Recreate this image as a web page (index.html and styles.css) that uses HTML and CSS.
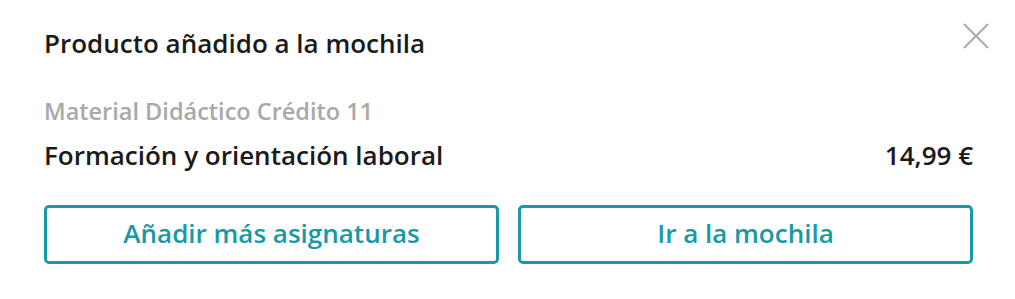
FILE: index.html
```html
<!DOCTYPE html>
<html lang="es">
<head>
<meta charset="UTF-8" />
<title>Producto añadido</title>
<link rel="stylesheet" href="styles.css">
</head>
<body>
  <div class="modal">
    <div class="modal-header">
      <h2 class="modal-title">Producto añadido a la mochila</h2>
      <button class="close-btn" aria-label="Cerrar">
        <svg width="26" height="26" viewBox="0 0 26 26">
          <path d="M1 1 L25 25 M25 1 L1 25" stroke="#a9a9a9" stroke-width="2" fill="none" />
        </svg>
      </button>
    </div>
    <div class="product">
      <div class="product-category">Material Didáctico Crédito 11</div>
      <div class="product-row">
        <span class="product-name">Formación y orientación laboral</span>
        <span class="product-price">14,99&nbsp;€</span>
      </div>
    </div>
    <div class="actions">
      <button class="btn-outline">Añadir más asignaturas</button>
      <button class="btn-outline">Ir a la mochila</button>
    </div>
  </div>
</body>
</html>
```

FILE: styles.css
```css
body {
  margin: 0;
  background: #fff;
  font-family: "Open Sans", Lato, sans-serif;
  color: #1a1a1a;
}
.modal {
  padding: 23px 42px 0 44px;
}
.modal-header {
  display: flex;
  justify-content: space-between;
  align-items: flex-start;
}
.modal-title {
  margin: 5px 0 0 0;
  font-size: 26px;
  font-weight: 600;
  line-height: 30px;
}
.close-btn {
  background: none;
  border: none;
  padding: 0;
  margin-right: -16px;
  cursor: pointer;
  line-height: 0;
}
.product {
  margin-top: 40px;
}
.product-category {
  color: #a9a9a9;
  font-size: 23.5px;
  font-weight: 600;
  line-height: 26px;
}
.product-row {
  display: flex;
  justify-content: space-between;
  margin-top: 16px;
  font-size: 26px;
  font-weight: 600;
  line-height: 30px;
}
.actions {
  display: flex;
  gap: 19px;
  margin-top: 35px;
}
.btn-outline {
  flex: 1;
  height: 59px;
  padding: 0 0 3px;
  background: #fff;
  border: 3px solid #189aa6;
  border-radius: 5px;
  color: #189aa6;
  font-family: inherit;
  font-size: 26px;
  font-weight: 600;
  cursor: pointer;
}
```
